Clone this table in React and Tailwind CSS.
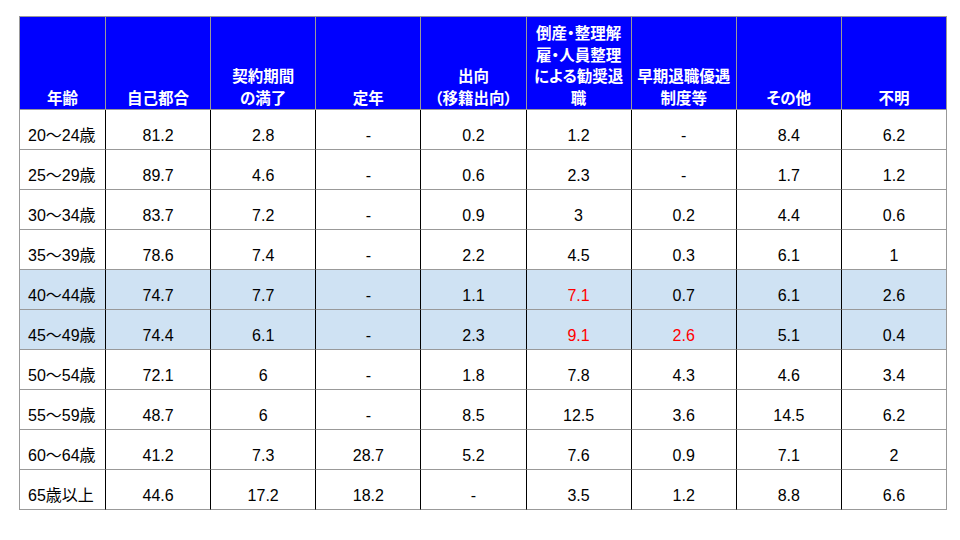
import React from "react";

const headers = [
  ["年齢"],
  ["自己都合"],
  ["契約期間", "の満了"],
  ["定年"],
  ["出向", "（移籍出向）"],
  ["倒産・整理解", "雇・人員整理", "による勧奨退", "職"],
  ["早期退職優遇", "制度等"],
  ["その他"],
  ["不明"],
];

const rows = [
  ["20〜24歳", "81.2", "2.8", "-", "0.2", "1.2", "-", "8.4", "6.2"],
  ["25〜29歳", "89.7", "4.6", "-", "0.6", "2.3", "-", "1.7", "1.2"],
  ["30〜34歳", "83.7", "7.2", "-", "0.9", "3", "0.2", "4.4", "0.6"],
  ["35〜39歳", "78.6", "7.4", "-", "2.2", "4.5", "0.3", "6.1", "1"],
  ["40〜44歳", "74.7", "7.7", "-", "1.1", "7.1", "0.7", "6.1", "2.6"],
  ["45〜49歳", "74.4", "6.1", "-", "2.3", "9.1", "2.6", "5.1", "0.4"],
  ["50〜54歳", "72.1", "6", "-", "1.8", "7.8", "4.3", "4.6", "3.4"],
  ["55〜59歳", "48.7", "6", "-", "8.5", "12.5", "3.6", "14.5", "6.2"],
  ["60〜64歳", "41.2", "7.3", "28.7", "5.2", "7.6", "0.9", "7.1", "2"],
  ["65歳以上", "44.6", "17.2", "18.2", "-", "3.5", "1.2", "8.8", "6.6"],
];

// highlighted rows and red cells
const blueRows = [4, 5];
const redCells = ["4-5", "5-5", "5-6"];

export default function App() {
  return (
    <div className="w-[960px] h-[540px] bg-white pt-4 pl-[19px]">
      <div className="w-[928px] grid grid-cols-[86px_repeat(8,1fr)] border-l border-[#999]">
        {headers.map((h, i) => (
          <div
            key={i}
            className="h-[94px] bg-[#0000ff] border-t border-b border-r border-[#999] flex flex-col justify-end items-center pb-[1px] text-white font-bold text-[15.5px] leading-[21.5px] text-center [font-feature-settings:'palt'] font-['Noto_Sans_CJK_JP',sans-serif]"
          >
            {h.map((line, j) => (
              <div key={j}>{line}</div>
            ))}
          </div>
        ))}
        {rows.map((r, i) =>
          r.map((v, j) => (
            <div
              key={i + "-" + j}
              className={
                "h-10 border-b border-b-[#999] border-r pt-[13px] flex items-center text-[16px] font-['Liberation_Sans','Noto_Sans_CJK_JP',sans-serif] " +
                (j === 8 ? "border-r-[#999] " : "border-r-black ") +
                (j === 0 ? "pl-[8px] justify-start " : "justify-center ") +
                (blueRows.includes(i) ? "bg-[#cfe2f3] " : "bg-white ") +
                (redCells.includes(i + "-" + j) ? "text-[#f00]" : "text-black")
              }
            >
              {v}
            </div>
          ))
        )}
      </div>
    </div>
  );
}
